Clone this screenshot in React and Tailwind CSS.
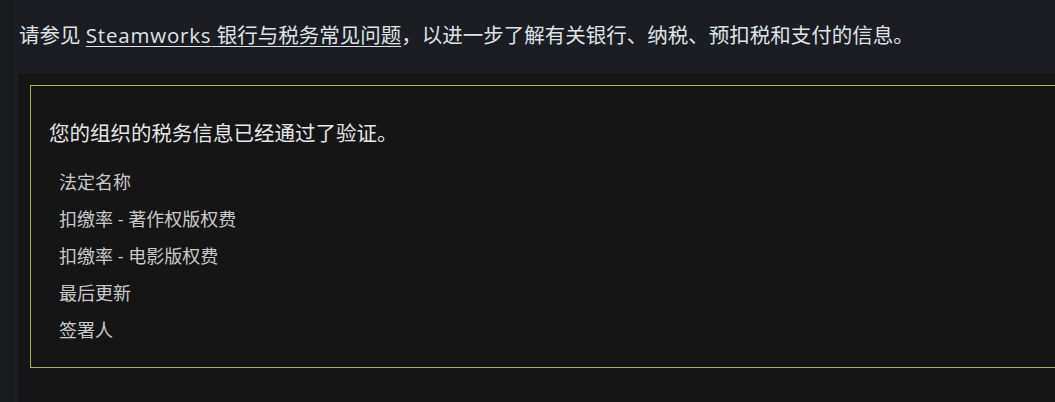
export default function App() {
  const items = ["法定名称", "扣缴率 - 著作权版权费", "扣缴率 - 电影版权费", "最后更新", "签署人"];
  return (
    <div
      className="flex h-[402px] w-[1055px] overflow-hidden bg-[#1b1d22]"
      style={{ fontFamily: '"Open Sans", "Noto Sans CJK SC", sans-serif' }}
    >
      <div className="w-[14px] shrink-0 bg-[#181a1e]" />
      <div className="flex min-w-0 flex-1 flex-col pl-[4px]">
        <p className="h-[73px] shrink-0 whitespace-nowrap pl-px pt-[21px] text-[20.5px] leading-[29px] text-[#dfe3e6]">
          请参见{" "}
          <a className="underline decoration-1 underline-offset-[3px]">
            <span className="tracking-[0.8px]">Steamworks</span> 银行与税务常见问题
          </a>
          ，以进一步了解有关银行、纳税、预扣税和支付的信息。
        </p>
        <div className="flex-1 bg-[#151515] pl-[12px] pt-[12px]">
          <div className="h-[283px] w-[1100px] border border-[#a9b54a] pl-[18px] pt-[33px]">
            <h2 className="text-[20.5px] leading-[28px] text-[#e4e6e8]">您的组织的税务信息已经通过了验证。</h2>
            <ul className="mt-[17px] pl-[10px]">
              {items.map((t) => (
                <li key={t} className="text-[18px] leading-[37px] text-[#c8c9ca]">
                  {t}
                </li>
              ))}
            </ul>
          </div>
        </div>
      </div>
    </div>
  );
}
